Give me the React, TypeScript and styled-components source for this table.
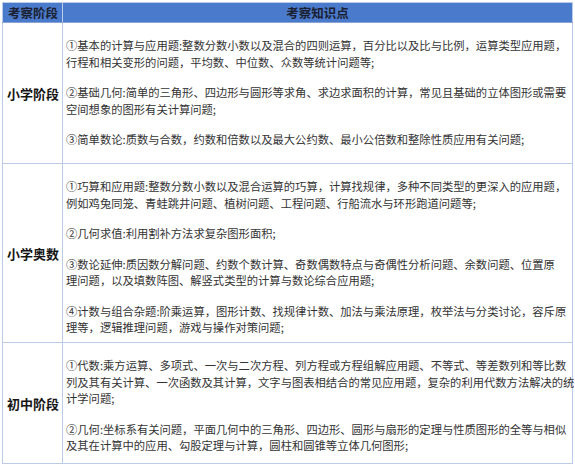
import React from 'react'
import styled, { createGlobalStyle } from 'styled-components'

const GlobalStyle = createGlobalStyle`
  html, body {
    margin: 0;
    padding: 0;
    background: #ffffff;
  }
  body {
    padding: 2px;
    font-family: "Noto Sans CJK SC", "Noto Sans", sans-serif;
  }
`

const Table = styled.table`
  border-collapse: collapse;
  table-layout: fixed;
  width: 570px;
  border: 1px solid #bccbe6;
`

const HeadCell = styled.th<{ $center?: boolean }>`
  height: 19px;
  padding: 0 0 0 ${p => (p.$center ? 0 : 5)}px;
  background: #4a7acc;
  color: #1a2030;
  font-size: 12.5px;
  font-weight: 700;
  line-height: 19px;
  text-align: ${p => (p.$center ? 'center' : 'left')};
  border: 1px solid #bccbe6;
  border-bottom: 1px solid #8aa4d6;
`

const StageCell = styled.td<{ $h: number }>`
  height: ${p => p.$h}px;
  padding: 0 0 0 4px;
  vertical-align: middle;
  font-size: 13px;
  font-weight: 700;
  color: #161616;
  white-space: nowrap;
  border: 1px solid #bccbe6;
`

const TopicCell = styled.td`
  padding: 14px 0 0 3px;
  vertical-align: top;
  border: 1px solid #bccbe6;
`

const Para = styled.p`
  margin: 0 0 14px;
  font-size: 11.3px;
  line-height: 16.5px;
  color: #333333;
  white-space: nowrap;
  &:last-child {
    margin-bottom: 0;
  }
`

const rows: { stage: string; height: number; paras: string[][] }[] = [
  {
    stage: '小学阶段',
    height: 140,
    paras: [
      [
        '①基本的计算与应用题:整数分数小数以及混合的四则运算，百分比以及比与比例，运算类型应用题，',
        '行程和相关变形的问题，平均数、中位数、众数等统计问题等;'
      ],
      [
        '②基础几何:简单的三角形、四边形与圆形等求角、求边求面积的计算，常见且基础的立体图形或需要',
        '空间想象的图形有关计算问题;'
      ],
      ['③简单数论:质数与合数，约数和倍数以及最大公约数、最小公倍数和整除性质应用有关问题;']
    ]
  },
  {
    stage: '小学奥数',
    height: 178,
    paras: [
      [
        '①巧算和应用题:整数分数小数以及混合运算的巧算，计算找规律，多种不同类型的更深入的应用题，',
        '例如鸡兔同笼、青蛙跳井问题、植树问题、工程问题、行船流水与环形跑道问题等;'
      ],
      ['②几何求值:利用割补方法求复杂图形面积;'],
      [
        '③数论延伸:质因数分解问题、约数个数计算、奇数偶数特点与奇偶性分析问题、余数问题、位置原',
        '理问题，以及填数阵图、解竖式类型的计算与数论综合应用题;'
      ],
      [
        '④计数与组合杂题:阶乘运算，图形计数、找规律计数、加法与乘法原理，枚举法与分类讨论，容斥原',
        '理等，逻辑推理问题，游戏与操作对策问题;'
      ]
    ]
  },
  {
    stage: '初中阶段',
    height: 120,
    paras: [
      [
        '①代数:乘方运算、多项式、一次与二次方程、列方程或方程组解应用题、不等式、等差数列和等比数',
        '列及其有关计算、一次函数及其计算，文字与图表相结合的常见应用题，复杂的利用代数方法解决的统',
        '计学问题;'
      ],
      [
        '②几何:坐标系有关问题，平面几何中的三角形、四边形、圆形与扇形的定理与性质图形的全等与相似',
        '及其在计算中的应用、勾股定理与计算，圆柱和圆锥等立体几何图形;'
      ]
    ]
  }
]

export default function App() {
  return (
    <>
      <GlobalStyle />
      <Table>
        <colgroup>
          <col style={{ width: 60 }} />
          <col style={{ width: 510 }} />
        </colgroup>
        <thead>
          <tr>
            <HeadCell>考察阶段</HeadCell>
            <HeadCell $center>考察知识点</HeadCell>
          </tr>
        </thead>
        <tbody>
          {rows.map(row => (
            <tr key={row.stage}>
              <StageCell $h={row.height}>{row.stage}</StageCell>
              <TopicCell>
                {row.paras.map((lines, i) => (
                  <Para key={i}>
                    {lines.map((line, j) => (
                      <React.Fragment key={j}>
                        {j > 0 && <br />}
                        {line}
                      </React.Fragment>
                    ))}
                  </Para>
                ))}
              </TopicCell>
            </tr>
          ))}
        </tbody>
      </Table>
    </>
  )
}
